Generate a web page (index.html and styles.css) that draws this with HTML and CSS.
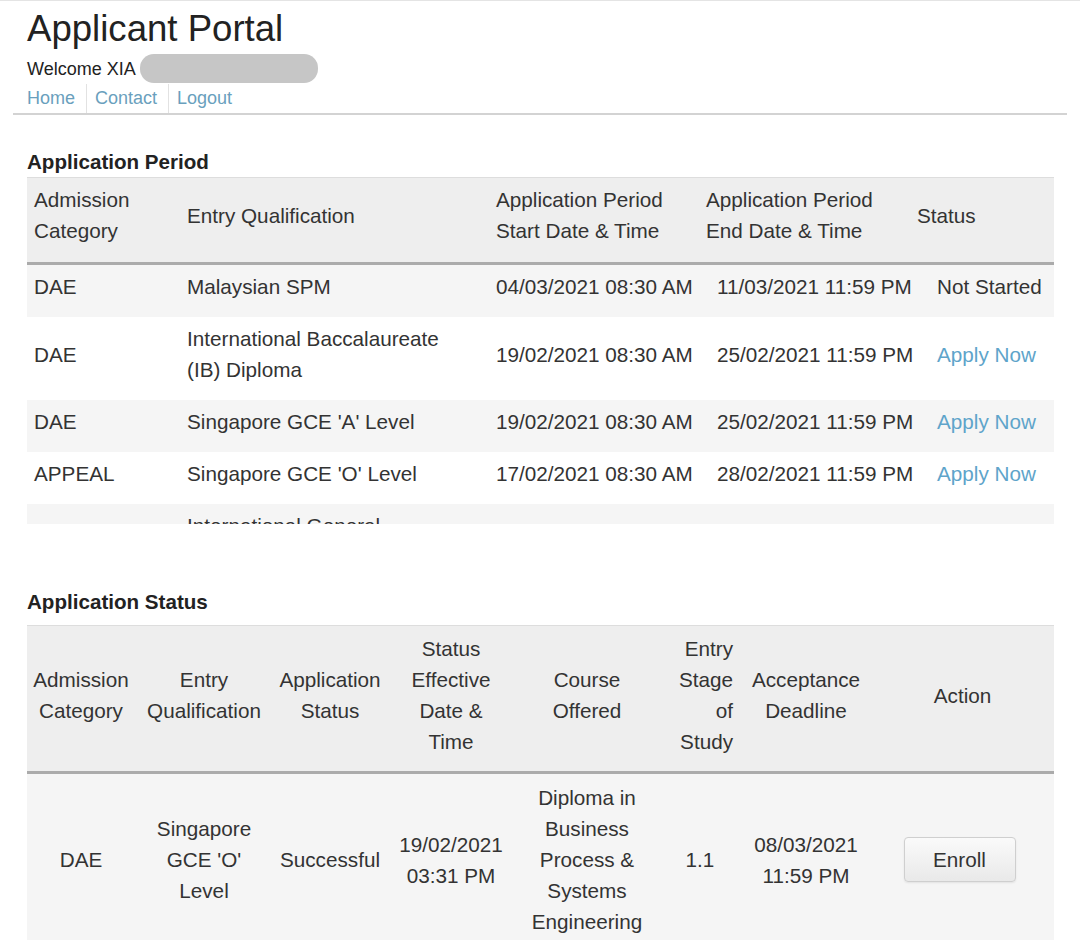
FILE: index.html
```html
<!DOCTYPE html>
<html lang="en">
<head>
<meta charset="utf-8">
<title>Applicant Portal</title>
<link rel="stylesheet" href="styles.css">
</head>
<body>
<div class="page">
  <header class="masthead">
    <h1 class="title">Applicant Portal</h1>
    <div class="welcome"><span class="welcome-text">Welcome XIA</span><span class="redacted"></span></div>
    <nav class="nav">
      <a href="#">Home</a>
      <a href="#">Contact</a>
      <a href="#">Logout</a>
    </nav>
  </header>

  <main class="content">
    <h2 class="section-title first">Application Period</h2>
    <table class="grid period-head">
      <colgroup><col class="p1"><col class="p2"><col class="p3h"><col class="p4h"><col></colgroup>
      <thead>
        <tr>
          <th>Admission<br>Category</th>
          <th>Entry Qualification</th>
          <th>Application Period<br>Start Date &amp; Time</th>
          <th>Application Period<br>End Date &amp; Time</th>
          <th>Status</th>
        </tr>
      </thead>
    </table>
    <div class="scroll-body">
      <table class="grid period-body">
        <colgroup><col class="p1"><col class="p2"><col class="p3b"><col class="p4b"><col></colgroup>
        <tbody>
          <tr>
            <td>DAE</td>
            <td>Malaysian SPM</td>
            <td>04/03/2021 08:30 AM</td>
            <td>11/03/2021 11:59 PM</td>
            <td>Not Started</td>
          </tr>
          <tr>
            <td>DAE</td>
            <td>International Baccalaureate<br>(IB) Diploma</td>
            <td>19/02/2021 08:30 AM</td>
            <td>25/02/2021 11:59 PM</td>
            <td><a class="link" href="#">Apply Now</a></td>
          </tr>
          <tr>
            <td>DAE</td>
            <td>Singapore GCE 'A' Level</td>
            <td>19/02/2021 08:30 AM</td>
            <td>25/02/2021 11:59 PM</td>
            <td><a class="link" href="#">Apply Now</a></td>
          </tr>
          <tr>
            <td>APPEAL</td>
            <td>Singapore GCE 'O' Level</td>
            <td>17/02/2021 08:30 AM</td>
            <td>28/02/2021 11:59 PM</td>
            <td><a class="link" href="#">Apply Now</a></td>
          </tr>
          <tr>
            <td></td>
            <td>International General</td>
            <td></td>
            <td></td>
            <td></td>
          </tr>
        </tbody>
      </table>
    </div>

    <h2 class="section-title second">Application Status</h2>
    <table class="grid status">
      <colgroup>
        <col class="s1"><col class="s2"><col class="s3"><col class="s4">
        <col class="s5"><col class="s6"><col class="s7"><col>
      </colgroup>
      <thead>
        <tr>
          <th>Admission<br>Category</th>
          <th>Entry<br>Qualification</th>
          <th>Application<br>Status</th>
          <th>Status<br>Effective<br>Date &amp;<br>Time</th>
          <th>Course<br>Offered</th>
          <th class="right">Entry<br>Stage<br>of<br>Study</th>
          <th>Acceptance<br>Deadline</th>
          <th>Action</th>
        </tr>
      </thead>
      <tbody>
        <tr>
          <td>DAE</td>
          <td>Singapore<br>GCE 'O'<br>Level</td>
          <td>Successful</td>
          <td>19/02/2021<br>03:31 PM</td>
          <td>Diploma in<br>Business<br>Process &amp;<br>Systems<br>Engineering</td>
          <td>1.1</td>
          <td>08/03/2021<br>11:59 PM</td>
          <td><button class="btn" type="button">Enroll</button></td>
        </tr>
      </tbody>
    </table>
  </main>
</div>
</body>
</html>
```

FILE: styles.css
```css
html, body {
  margin: 0;
  padding: 0;
  background: #ffffff;
}

body {
  font-family: "Liberation Sans", Arial, Helvetica, sans-serif;
  color: #333333;
  border-top: 1px solid #e4e4e4;
}

.page {
  padding: 0 13px;
}

.masthead {
  padding-left: 14px;
  border-bottom: 2px solid #d3d3d3;
}

.title {
  margin: 0;
  padding-top: 7px;
  font-size: 36.6px;
  line-height: 42px;
  font-weight: normal;
  color: #222222;
}

.welcome {
  display: flex;
  align-items: center;
  height: 30px;
  margin-top: 3px;
  font-size: 18px;
  color: #222222;
}

.welcome-text {
  padding-top: 3px;
}

.redacted {
  display: inline-block;
  width: 178px;
  height: 29px;
  margin-left: 4px;
  border-radius: 14px;
  background: #c6c6c6;
}

.nav {
  display: flex;
  margin-top: 1px;
  height: 29px;
  font-size: 18px;
  line-height: 29px;
}

.nav a {
  color: #6a9fbd;
  text-decoration: none;
  padding: 0 11px 0 8px;
  border-left: 1px solid #e2e2e2;
}

.nav a:first-child {
  padding-left: 0;
  border-left: none;
}

.content {
  padding: 0 13px 0 14px;
}

.section-title {
  margin: 0;
  font-size: 20.6px;
  line-height: 24px;
  font-weight: bold;
  color: #222222;
}

.section-title.first {
  margin-top: 35px;
  margin-bottom: 3px;
}

.section-title.second {
  margin-top: 66px;
  margin-bottom: 11px;
}

.grid {
  width: 100%;
  border-collapse: collapse;
  table-layout: fixed;
  font-size: 20.7px;
  line-height: 31px;
}

.grid th {
  font-weight: normal;
  background: #eeeeee;
  vertical-align: middle;
  border-bottom: 3px solid #ababab;
}

.grid td {
  vertical-align: middle;
}

.period-head {
  border-top: 1px solid #dddddd;
}

.period-head th {
  text-align: left;
  padding: 6px 7px 16px;
}

.period-body td {
  text-align: left;
  padding: 6px 7px 15px;
  white-space: nowrap;
}

.period-body tr:nth-child(odd) td {
  background: #f5f5f5;
}

.scroll-body {
  height: 259px;
  overflow: hidden;
}

.p1 { width: 153px; }
.p2 { width: 309px; }
.p3h { width: 210px; }
.p4h { width: 211px; }
.p3b { width: 221px; }
.p4b { width: 220px; }

.link {
  color: #5ea4ca;
  text-decoration: none;
}

.status {
  border-top: 1px solid #dddddd;
}

.status th {
  text-align: center;
  padding: 7px 2px 14px;
  white-space: nowrap;
}

.status th.right {
  text-align: right;
  padding-right: 8px;
}

.status td {
  text-align: center;
  padding: 8px 2px;
  white-space: nowrap;
  background: #f5f5f5;
}

.s1 { width: 108px; }
.s2 { width: 138px; }
.s3 { width: 114px; }
.s4 { width: 128px; }
.s5 { width: 144px; }
.s6 { width: 82px; }
.s7 { width: 130px; }

.btn {
  width: 112px;
  height: 45px;
  margin-left: -6px;
  font-family: "Liberation Sans", Arial, Helvetica, sans-serif;
  font-size: 20.7px;
  color: #333333;
  background: linear-gradient(#fafafa, #e9e9e9);
  border: 1px solid #cfcfcf;
  border-radius: 4px;
  box-shadow: 0 1px 2px rgba(0, 0, 0, 0.08);
  cursor: pointer;
}
```
